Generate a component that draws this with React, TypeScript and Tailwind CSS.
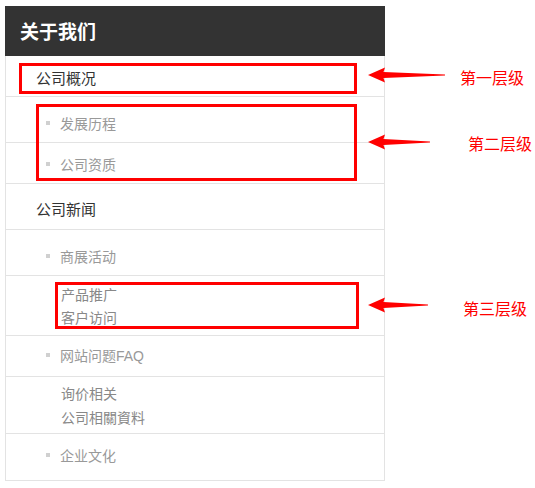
import React from 'react'

const font = { fontFamily: '"Liberation Sans", "Noto Sans CJK SC", sans-serif' }

const SubItem = ({ label, className }: { label: string; className: string }) => (
    <div className={`flex items-start gap-[10px] border-b border-[#e3e3e3] pl-[40px] text-[14px] leading-[20px] text-[#999] ${className}`}>
        <span className='mt-[7px] w-[4px] h-[4px] bg-[#d0d0d0]' />
        <span>{label}</span>
    </div>
)

const Arrow = ({ x, y, len }: { x: number; y: number; len: number }) => (
    <svg className='absolute' style={{ left: x, top: y - 8 }} width={len} height={16} viewBox={`0 0 ${len} 16`}>
        <polygon points={`0,8 17,0.5 15.5,5 ${len},7.4 ${len},8.4 15.5,11 17,15.5`} fill='#ff0000' />
    </svg>
)

export default function App() {
    return (
        <div className='relative w-[535px] h-[488px] bg-white' style={font}>
            <div className='pt-[6px] pl-[5px]'>
                <div className='flex flex-col w-[380px] border-x border-b border-[#e3e3e3]'>
                    <div className='h-[50px] bg-[#333333] text-white font-bold text-[19px] leading-[20px] pl-[15px] pt-[17px] -mx-px'>关于我们</div>
                    <div className='h-[41px] border-b border-[#e3e3e3] pl-[30px] pt-[13px] text-[15px] leading-[20px] text-[#333]'>公司概况</div>
                    <SubItem label='发展历程' className='h-[46px] pt-[17px]' />
                    <SubItem label='公司资质' className='h-[41px] pt-[12px]' />
                    <div className='h-[46px] border-b border-[#e3e3e3] pl-[30px] pt-[16px] text-[15px] leading-[20px] text-[#333]'>公司新闻</div>
                    <SubItem label='商展活动' className='h-[46px] pt-[17px]' />
                    <div className='flex flex-col h-[60px] border-b border-[#e3e3e3] pl-[55px] pt-[8px] text-[14px] leading-[23px] text-[#888]'>
                        <span>产品推广</span>
                        <span>客户访问</span>
                    </div>
                    <SubItem label='网站问题FAQ' className='h-[41px] pt-[10px]' />
                    <div className='flex flex-col h-[57px] border-b border-[#e3e3e3] pl-[55px] pt-[5px] text-[14px] leading-[24px] text-[#888]'>
                        <span>询价相关</span>
                        <span>公司相關資料</span>
                    </div>
                    <SubItem label='企业文化' className='h-[46px] pt-[12px] border-b-0' />
                </div>
            </div>

            <div className='absolute left-[19px] top-[63px] w-[338px] h-[31px] border-[3px] border-[#ff0000]' />
            <div className='absolute left-[36px] top-[104px] w-[321px] h-[77px] border-[3px] border-[#ff0000]' />
            <div className='absolute left-[55px] top-[282px] w-[304px] h-[47px] border-[3px] border-[#ff0000]' />

            <Arrow x={368} y={75} len={77} />
            <Arrow x={368} y={142} len={62} />
            <Arrow x={368} y={305} len={60} />

            <div className='absolute left-[460px] top-[69px] text-[16px] leading-[20px] text-[#ff0000]'>第一层级</div>
            <div className='absolute left-[468px] top-[135px] text-[16px] leading-[20px] text-[#ff0000]'>第二层级</div>
            <div className='absolute left-[463px] top-[300px] text-[16px] leading-[20px] text-[#ff0000]'>第三层级</div>
        </div>
    )
}
